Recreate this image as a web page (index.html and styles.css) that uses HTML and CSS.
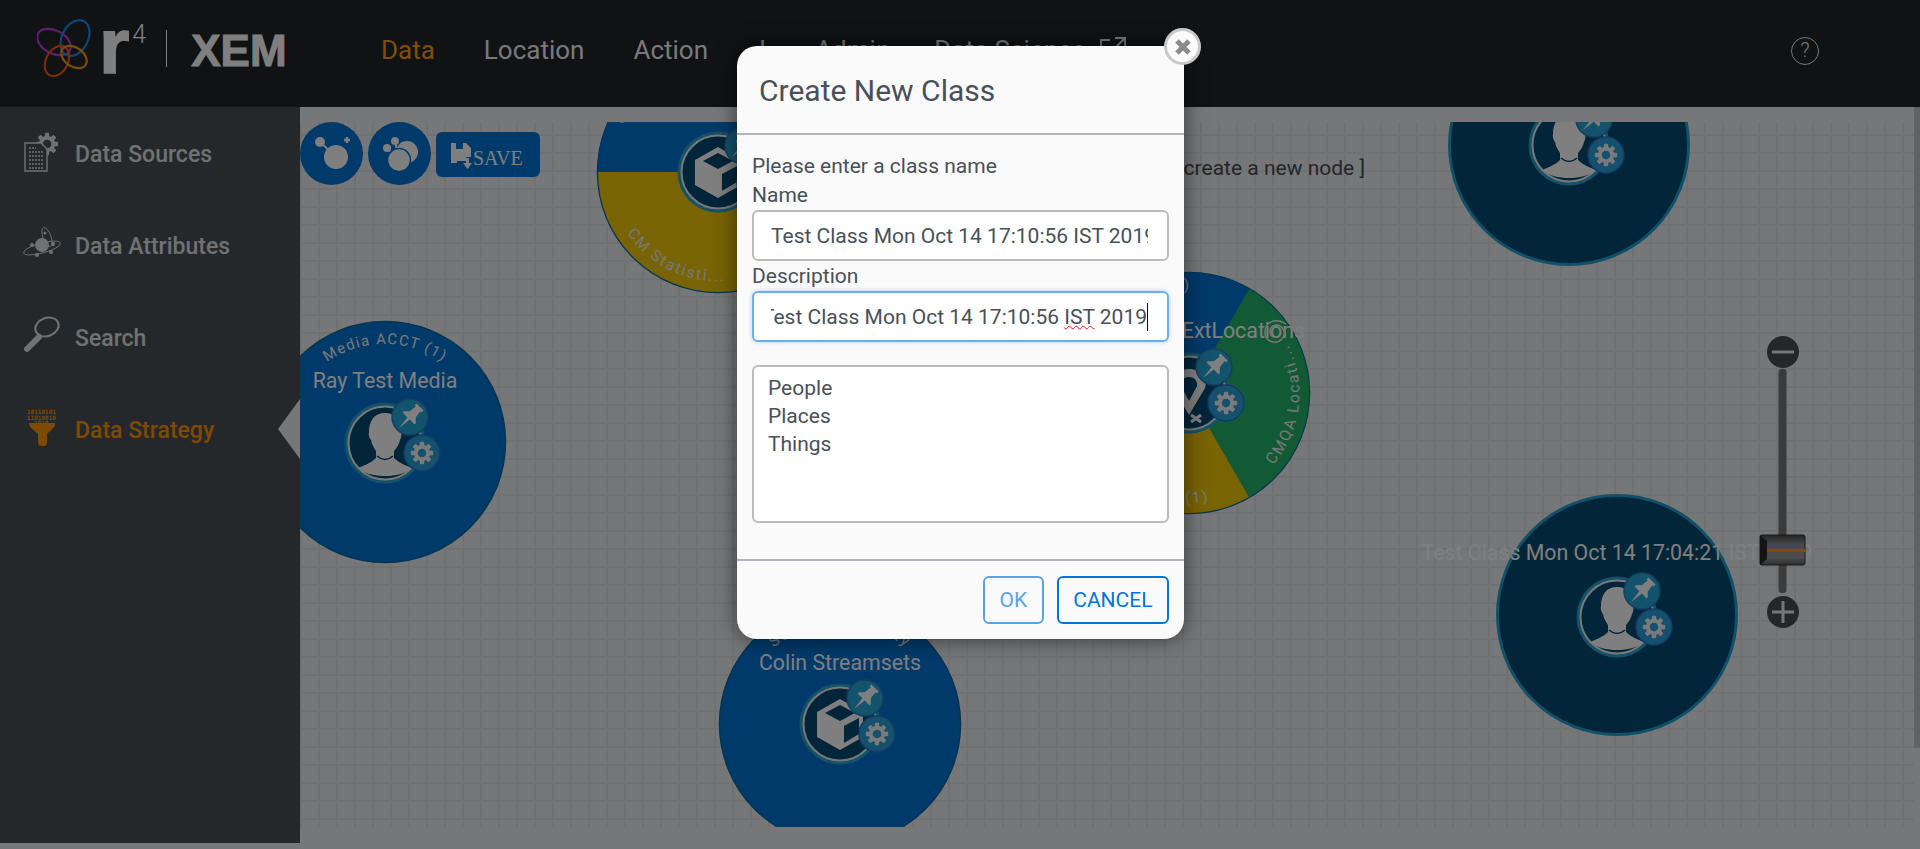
FILE: index.html
```html
<!DOCTYPE html>
<html lang="en">
<head>
<meta charset="utf-8">
<title>XEM - Data Strategy</title>
<link rel="stylesheet" href="styles.css">
</head>
<body>
<svg class="defs" width="0" height="0" aria-hidden="true">
  <defs>
    <linearGradient id="thumb-shade" x1="0" y1="0" x2="0" y2="1">
      <stop offset="0" stop-color="#4a4a4a"/>
      <stop offset=".3" stop-color="#8c8c8c"/>
      <stop offset=".75" stop-color="#9a9a9a"/>
      <stop offset="1" stop-color="#5a5a5a"/>
    </linearGradient>
    <g id="gear">
      <g transform="scale(.86)">
        <g class="gear-teeth">
          <rect x="-2.5" y="-13" width="5" height="26" rx="1"/>
          <rect x="-2.5" y="-13" width="5" height="26" rx="1" transform="rotate(45)"/>
          <rect x="-2.5" y="-13" width="5" height="26" rx="1" transform="rotate(90)"/>
          <rect x="-2.5" y="-13" width="5" height="26" rx="1" transform="rotate(135)"/>
        </g>
        <circle r="9.5" class="gear-ring"/>
        <circle r="5" class="gear-hole"/>
      </g>
    </g>
    <g id="controls">
      <circle cx="25" cy="-26" r="18" class="pin-btn"/>
      <path transform="translate(26,-27) rotate(45) scale(.85)" class="glyph" d="M-6-15H6V-12H4L5-3L10 2V4H2L0 20L-2 4H-10V2L-5-3L-4-12H-6Z"/>
      <g transform="translate(37,10)">
        <circle r="18" class="gear-btn"/>
        <use href="#gear"/>
      </g>
    </g>
    <g id="disc">
      <circle r="40.5" class="disc-ring"/>
      <circle r="36.5" class="disc-inner"/>
    </g>
    <g id="person">
      <use href="#disc"/>
      <path class="glyph" d="M0-30C-11-30-16-22-16-11C-17-8-15-4-14-3C-13 2-11 5-9 8L-9 15C-14 20-22 23-27 25C-20 31-10 33 0 33C10 33 20 31 27 25C22 23 14 20 9 15L9 8C12 5 14 1 15-3C16-5 17-8 16-11C16-22 11-30 0-30Z"/>
      <path class="chin" d="M-8 13Q0 20 8 13"/>
      <use href="#controls"/>
    </g>
    <g id="cube">
      <use href="#disc"/>
      <path class="glyph" d="M0-25L23-12V13L0 26L-23 13V-12Z"/>
      <path class="cube-dark" d="M0-19L15-11L0-3L-15-11Z"/>
      <path class="cube-dark" d="M4 2L19-6V10L4 19Z"/>
      <use href="#controls"/>
    </g>
  </defs>
</svg>

<header class="topbar">
  <div class="logo">
    <svg class="logo-mark" width="58" height="60" viewBox="0 0 58 60">
      <ellipse cx="17" cy="24" rx="18" ry="11.5" transform="rotate(28 17 24)" class="ring-purple"/>
      <ellipse cx="38" cy="20" rx="13" ry="19" transform="rotate(28 38 20)" class="ring-blue"/>
      <ellipse cx="20" cy="43" rx="11" ry="16" transform="rotate(28 20 43)" class="ring-red"/>
      <ellipse cx="37" cy="39" rx="14" ry="9.5" transform="rotate(35 37 39)" class="ring-orange"/>
    </svg>
    <span class="logo-r">r</span><span class="logo-four">4</span>
    <span class="logo-divider"></span>
    <span class="logo-xem">XEM</span>
  </div>
  <nav class="nav">
    <a class="nav-item active">Data</a>
    <a class="nav-item">Location</a>
    <a class="nav-item">Action</a>
    <a class="nav-item nav-short">I</a>
    <a class="nav-item">Admin</a>
    <a class="nav-item nav-last">Data Science</a>
    <svg class="ext-link" width="26" height="22" viewBox="0 0 26 22"><path d="M10 3H1V21H21V12M15 1H25V11M25 1L11 15"/></svg>
  </nav>
  <div class="help">?</div>
</header>

<div class="main">
  <aside class="sidebar">
    <div class="side-item">
      <svg class="side-icon" width="40" height="40" viewBox="0 0 40 40">
        <g transform="translate(24,11)" class="side-gear"><use href="#gear"/></g>
        <path class="side-doc" d="M2 10H18L24 16V38H2Z"/>
        <path class="side-lines" d="M6 15H13M6 19H21M6 23H21M6 27H21M6 31H21M6 35H21"/>
      </svg>
      <span>Data Sources</span>
    </div>
    <div class="side-item">
      <svg class="side-icon" width="40" height="40" viewBox="0 0 40 40">
        <circle cx="19" cy="20" r="7" class="side-fill"/>
        <ellipse cx="19" cy="23" rx="19" ry="5" transform="rotate(-15 19 23)" class="side-stroke"/>
        <ellipse cx="24" cy="12" rx="4" ry="10" transform="rotate(-20 24 12)" class="side-stroke"/>
        <circle cx="9" cy="20" r="2" class="side-fill"/><circle cx="30" cy="19" r="2" class="side-fill"/><circle cx="28" cy="27" r="2" class="side-fill"/><circle cx="14" cy="30" r="2" class="side-fill"/><circle cx="22" cy="8" r="1.5" class="side-fill"/>
      </svg>
      <span>Data Attributes</span>
    </div>
    <div class="side-item">
      <svg class="side-icon" width="40" height="40" viewBox="0 0 40 40">
        <ellipse cx="24" cy="10" rx="12" ry="9" transform="rotate(-20 24 10)" class="side-stroke-thick"/>
        <path class="side-handle" d="M16 20L4 32"/>
      </svg>
      <span>Search</span>
    </div>
    <div class="side-item current">
      <svg class="side-icon" width="40" height="40" viewBox="0 0 40 40">
        <text x="4" y="5" class="bits">10110101</text>
        <text x="4" y="10.500" class="bits">11010010</text>
        <text x="11" y="15.500" class="bits">1010</text>
        <path class="funnel" d="M6 14H32V17L24 25V33Q24 37 21 37H18Q15 37 15 33V25L7 18Z"/>
      </svg>
      <span>Data Strategy</span>
    </div>
    <div class="side-arrow"></div>
  </aside>

  <section class="workspace">
    <svg class="canvas" viewBox="300 122 1614 705" width="1614" height="705">
      <defs>
        <path id="arc-ray" d="M282 447A103 103 0 0 1 488 447"/>
        <path id="arc-cm-top" d="M623 125A106 106 0 0 1 824 172"/>
        <path id="arc-cm-low" d="M627 233A110 110 0 0 0 828 172"/>
        <path id="arc-ext-top" d="M1086 393A103 103 0 0 1 1191 290"/>
        <path id="arc-ext-right" d="M1273 465A110 110 0 0 0 1244 298"/>
        <path id="arc-ext-low" d="M1085 425A110 110 0 0 0 1210 501"/>
        <path id="arc-colin" d="M735 729A105 105 0 0 1 945 729"/>
      </defs>

      <text class="hint" x="1365" y="175" text-anchor="end">[ Double click to create a new node ]</text>

      <g class="node">
        <circle cx="718" cy="172" r="120.5" class="wedge-edge"/>
        <path class="wedge-blue" d="M598 172A120 120 0 0 1 838 172Z"/>
        <path class="wedge-yellow" d="M598 172A120 120 0 0 0 838 172Z"/>
        <text class="arc"><textPath href="#arc-cm-top">CM Activity (1)</textPath></text>
        <text class="arc"><textPath href="#arc-cm-low">CM Statisti...</textPath></text>
        <use href="#cube" x="718" y="172"/>
      </g>

      <g class="node">
        <circle cx="1189" cy="393" r="120.5" class="wedge-edge"/>
        <path class="wedge-blue" d="M1189 393L1085 453A120 120 0 0 1 1249 289Z"/>
        <path class="wedge-green" d="M1189 393L1249 289A120 120 0 0 1 1249 497Z"/>
        <path class="wedge-yellow" d="M1189 393L1249 497A120 120 0 0 1 1085 453Z"/>
        <text class="arc"><textPath href="#arc-ext-top" startOffset="100%" text-anchor="end">CM Activity (1)</textPath></text>
        <text class="arc"><textPath href="#arc-ext-right">CMQA Locati...</textPath></text>
        <text class="arc"><textPath href="#arc-ext-low" startOffset="100%" text-anchor="end">CM Locations (1)</textPath></text>
        <text class="label" x="1305" y="338" text-anchor="end">ExtLocations</text>
        <path class="swirl" d="M1286 324C1276 317 1265 322 1265 332C1265 342 1276 345 1282 339C1287 333 1283 325 1276 325C1269 326 1268 335 1274 337"/>
        <g transform="translate(1189,393)">
          <use href="#disc"/>
          <path class="glyph" d="M0-24C-13-24-19-14-16-5L0 22L16-5C19-14 13-24 0-24ZM0-16C6-16 9-11 8-7L0 8L-8-7C-9-11-6-16 0-16Z"/>
          <path class="x-mark" d="M2 22L12 29M12 22L2 29"/>
          <use href="#controls"/>
        </g>
      </g>

      <g class="node">
        <circle cx="385" cy="442" r="120.5" class="wedge-edge wedge-blue"/>
        <text class="arc arc-tight"><textPath href="#arc-ray" startOffset="50%" text-anchor="middle">Media ACCT (1)</textPath></text>
        <text class="label" x="385" y="388" text-anchor="middle">Ray Test Media</text>
        <use href="#person" x="385" y="443"/>
      </g>

      <g class="node">
        <circle cx="840" cy="724" r="120.5" class="wedge-edge wedge-blue"/>
        <text class="arc"><textPath href="#arc-colin" startOffset="50%" text-anchor="middle">Strategy Activity</textPath></text>
        <text class="label" x="840" y="670" text-anchor="middle">Colin Streamsets</text>
        <use href="#cube" x="840" y="724"/>
      </g>

      <g class="node">
        <circle cx="1569" cy="145" r="119.5" class="navy"/>
        <use href="#person" x="1569" y="145"/>
      </g>

      <g class="node">
        <circle cx="1617" cy="615" r="119.5" class="navy"/>
        <text class="label" x="1617" y="560" text-anchor="middle">Test Class Mon Oct 14 17:04:21 IST 2019</text>
        <use href="#person" x="1617" y="617"/>
      </g>

      <g class="zoomer">
        <rect x="1778.500" y="369" width="8" height="224" rx="3" class="zoom-track"/>
        <circle cx="1783" cy="352" r="16" class="zoom-btn"/>
        <path d="M1772 352H1794" class="zoom-sign"/>
        <circle cx="1783" cy="612" r="16" class="zoom-btn"/>
        <path d="M1772 612H1794M1783 601V623" class="zoom-sign"/>
        <rect x="1760" y="535" width="45" height="30" rx="2" class="thumb"/>
        <path d="M1760 535L1767 541V559L1760 565Z" class="thumb-side"/>
        <rect x="1767" y="549" width="38" height="3" class="thumb-line"/>
      </g>
    </svg>

    <div class="toolbar">
      <button class="tool-round" aria-label="Add class">
        <svg width="63" height="63" viewBox="0 0 63 63">
          <path class="tool-line" d="M20 20L36 35"/>
          <circle cx="36" cy="35" r="12" class="tool-fill"/>
          <circle cx="20" cy="20" r="5" class="tool-fill"/>
          <path class="tool-line thin" d="M44 18H50M47 15V21"/>
        </svg>
      </button>
      <button class="tool-round" aria-label="Group classes">
        <svg width="63" height="63" viewBox="0 0 63 63">
          <path class="tool-line" d="M27 19L31 38M19 26L31 38"/>
          <circle cx="39" cy="30" r="11" class="tool-fill"/>
          <circle cx="31" cy="38" r="11.500" class="tool-fill ringed"/>
          <circle cx="27" cy="19" r="4" class="tool-fill"/>
          <circle cx="19" cy="26" r="4" class="tool-fill"/>
        </svg>
      </button>
      <button class="tool-save">
        <svg width="24" height="26" viewBox="0 0 24 26">
          <path class="tool-fill" d="M0 0H15L20 5V14H15V18H6V20H0Z"/>
          <path class="save-cut" d="M5 0H12V6H5Z"/>
          <path class="tool-fill" d="M15 15H18V20H21L16.500 26L12 20H15Z"/>
        </svg>
        <span>SAVE</span>
      </button>
    </div>
  </section>
</div>

<div class="scrollbar"></div>
<div class="backdrop"></div>

<div class="modal" role="dialog">
  <button class="modal-close" aria-label="Close">
    <svg width="18" height="18" viewBox="0 0 18 18"><path d="M3 3L15 15M15 3L3 15"/></svg>
  </button>
  <div class="modal-head">Create New Class</div>
  <div class="modal-body">
    <div class="field-label">Please enter a class name</div>
    <div class="field-label">Name</div>
    <div class="input"><div class="input-view"><span>Test Class Mon Oct 14 17:10:56 IST 2019</span></div></div>
    <div class="field-label field-gap">Description</div>
    <div class="input focused"><div class="input-view"><span class="caret">Test Class Mon Oct 14 17:10:56 <u class="typo">IST</u> 2019</span></div></div>
    <div class="listbox">
      <div>People</div>
      <div>Places</div>
      <div>Things</div>
    </div>
  </div>
  <div class="modal-foot">
    <button class="btn btn-disabled">OK</button>
    <button class="btn">CANCEL</button>
  </div>
</div>
</body>
</html>
```

FILE: styles.css
```css
* { box-sizing: border-box; }
html, body { margin: 0; height: 849px; overflow: hidden; }
body {
  position: relative;
  background: #eceef0;
  font-family: Roboto, "Liberation Sans", sans-serif;
  color: #495057;
}
.defs { position: absolute; }

/* top bar */
.topbar {
  height: 107px;
  background: #202428;
  display: flex;
  align-items: flex-start;
  padding-left: 37px;
  position: relative;
}
.logo { display: flex; align-items: flex-start; width: 344px; padding-top: 18px; color: #fff; }
.logo-mark { fill: none; stroke-width: 2.2; flex: none; }
.ring-purple { stroke: #c23ae0; }
.ring-blue { stroke: #1690f0; }
.ring-red { stroke: #f05a14; }
.ring-orange { stroke: #f59a10; }
.logo-r { font: bold 78px/1 "Liberation Sans", sans-serif; margin: -11px 0 0 4px; -webkit-text-stroke: 1.5px #fff; }
.logo-four { font: 300 25px/1 Roboto, sans-serif; margin: 4px 0 0 3px; }
.logo-divider { width: 1px; height: 37px; background: #fff; margin: 12px 0 0 20px; }
.logo-xem { font: bold 44px/1 "Liberation Sans", sans-serif; margin: 11px 0 0 24px; -webkit-text-stroke: 1px #fff; }
.nav { display: flex; gap: 49px; padding-top: 35px; position: relative; }
.nav-item { font-size: 26px; line-height: 30px; color: #f2f2f2; }
.nav-item.active { color: #ff9d10; }
.nav-short { margin-left: 2px; }
.nav-last { margin-left: -5px; }
.ext-link { margin: 2px 0 0 -34px; fill: none; stroke: #f2f2f2; stroke-width: 2; }
.help {
  position: absolute; left: 1791px; top: 37px;
  width: 28px; height: 28px; border-radius: 50%;
  border: 1.5px solid #eee; color: #eee;
  font-size: 20px; line-height: 25px; text-align: center; font-weight: 300;
}

/* layout */
.main { display: flex; height: 742px; }
.sidebar {
  width: 300px; height: 736px; flex: none;
  background: #485056; position: relative;
}
.side-item {
  height: 92px; display: flex; align-items: center; gap: 12px;
  padding-left: 23px;
  font-size: 23px; font-weight: 500; color: #e0e2e4;
}
.side-item span { margin-top: 2px; }
.side-icon { flex: none; overflow: visible; }
.side-gear { --gear-fill: #e0e2e4; --gear-hole: #485056; }
.side-doc { fill: #485056; stroke: #e0e2e4; stroke-width: 1.4; }
.side-lines { stroke: #e0e2e4; stroke-width: 1.6; stroke-dasharray: 2 1; fill: none; }
.side-fill { fill: #e0e2e4; }
.side-stroke { fill: none; stroke: #e0e2e4; stroke-width: .9; }
.side-stroke-thick { fill: none; stroke: #e0e2e4; stroke-width: 2; }
.side-handle { stroke: #e0e2e4; stroke-width: 6; stroke-linecap: round; }
.side-item.current { color: #fa9400; }
.bits { font: bold 6px "DejaVu Sans Mono", monospace; fill: #fa9400; }
.funnel { fill: #fa9400; }
.side-arrow {
  position: absolute; right: 0; top: 292px;
  border-style: solid; border-width: 30px 22px 30px 0;
  border-color: transparent #eceef0 transparent transparent;
}

/* canvas */
.workspace { flex: 1; position: relative; padding-top: 15px; }
.canvas {
  display: block;
  background-color: #eceef0;
  background-image:
    linear-gradient(#e0e2e4 2px, transparent 2px),
    linear-gradient(90deg, #e0e2e4 2px, transparent 2px);
  background-size: 18px 18px;
  background-position: 0 12px;
  font-family: Roboto, sans-serif;
}
.hint { font-size: 21px; fill: #4c4c4c; }
.wedge-edge { stroke: #0a6aa0; stroke-width: 1.5; fill: #0a6aa0; }
.wedge-blue { fill: #0074d6; }
.wedge-yellow { fill: #f2c808; }
.wedge-green { fill: #24b46a; }
.navy { fill: #044a72; stroke: #20a0d0; stroke-width: 3; }
.arc { font-size: 15.5px; letter-spacing: 1.9px; fill: #f0f0f0; }
.arc-tight { font-size: 15px; letter-spacing: 1.3px; }
.label { font-size: 21.33px; fill: #fff; }
.swirl { fill: none; stroke: #f0f0f0; stroke-width: 1.5; }
.disc-ring { fill: #2aa3d0; }
.disc-inner { fill: #044a72; stroke: #f0f0f0; stroke-width: 2; }
.cube-dark { fill: #044a72; }
.glyph { fill: #fff; }
.chin { fill: none; stroke: #044a72; stroke-width: 1.5; }
.pin-btn { fill: #26a6d6; stroke: #2a7ec0; stroke-width: 1.5; }
.gear-btn { fill: #2aa0dc; stroke: #1f78c8; stroke-width: 1.5; }
.gear-ring, .gear-teeth rect { fill: var(--gear-fill, #f4f4f4); }
.gear-hole { fill: var(--gear-hole, #2aa0dc); }
.x-mark { fill: none; stroke: #fff; stroke-width: 3; }
.zoom-btn { fill: #484f55; }
.zoom-sign { stroke: #eee; stroke-width: 3; fill: none; }
.zoom-track { fill: #777; }
.thumb { fill: url(#thumb-shade); stroke: #333; stroke-width: 1; }
.thumb-side { fill: #2a2a2a; }
.thumb-line { fill: #ff9a20; }

/* toolbar */
.toolbar { position: absolute; left: 0; top: 15px; display: flex; align-items: flex-start; gap: 5px; }
.tool-round { width: 63px; height: 63px; border: 0; padding: 0; border-radius: 50%; background: #0074d6; flex: none; }
.tool-round svg { display: block; }
.tool-fill { fill: #fff; }
.tool-fill.ringed { stroke: #0074d6; stroke-width: 1.5; }
.tool-line { stroke: #fff; stroke-width: 2; fill: none; }
.tool-line.thin { stroke-width: 2.5; }
.save-cut { fill: #0074d6; }
.tool-save {
  margin-top: 10px; width: 104px; height: 45px; border: 0; border-radius: 6px;
  background: #0074d6; color: #fff; padding: 0 0 0 15px;
  display: flex; align-items: flex-start; text-align: left;
  font: 20px/1 "Liberation Serif", serif;
}
.tool-save svg { flex: none; margin: 11px -2px 0 0; }
.tool-save span { margin-top: 16px; }

.scrollbar { position: absolute; right: 0; top: 107px; width: 6px; height: 641px; background: #c0c4cc; }
.backdrop { position: absolute; inset: 0; background: rgba(0, 0, 0, .5); }

/* modal */
.modal {
  position: absolute; left: 737px; top: 46px; width: 447px; height: 593px;
  background: #fafafa; border-radius: 20px;
  box-shadow: 0 0 22px rgba(0, 0, 0, .55);
  display: flex; flex-direction: column;
  color: #495057;
}
.modal-close {
  position: absolute; right: -17px; top: -18px;
  width: 37px; height: 37px; border-radius: 50%;
  background: #fafafa; border: 3px solid #c8c8c8; padding: 0;
  display: flex; align-items: center; justify-content: center;
}
.modal-close path { stroke: #8c8c8c; stroke-width: 5; fill: none; }
.modal-head {
  height: 89px; padding: 27px 22px 0;
  font-size: 30px; line-height: 36px;
  border-bottom: 2px solid #aeb5bd;
}
.modal-body { height: 426px; padding: 17px 15px 0; border-bottom: 2px solid #aeb5bd; flex: none; }
.field-label { font-size: 21px; line-height: 29px; }
.field-gap { line-height: 30px; }
.input {
  height: 51px; background: #fff; border: 2px solid #bbb; border-radius: 6px;
  display: flex; align-items: center; padding: 1px 19px 0 17px;
  font-size: 21px; white-space: nowrap;
}
.input-view { flex: 1; min-width: 0; overflow: hidden; display: flex; }
.input.focused { border-color: #6ab0f0; box-shadow: 0 0 4px rgba(100, 170, 240, .5); }
.focused .input-view { justify-content: flex-end; }
.input-view span { flex: none; line-height: 28px; }
.input-view .caret { border-right: 1.5px solid #111; }
.typo { text-decoration: underline wavy #f01010 1px; }
.listbox {
  height: 158px; margin-top: 23px; background: #fff; border: 2px solid #bbb; border-radius: 6px;
  padding: 7px 14px; font-size: 21px; line-height: 28px;
}
.modal-foot { display: flex; justify-content: flex-end; gap: 13px; padding: 15px 15px 0; }
.btn {
  height: 48px; padding: 0 14.5px; background: transparent;
  border: 2px solid #0275d8; border-radius: 6px; color: #0275d8;
  font: 21px Roboto, sans-serif;
}
.btn-disabled { opacity: .65; }
```
